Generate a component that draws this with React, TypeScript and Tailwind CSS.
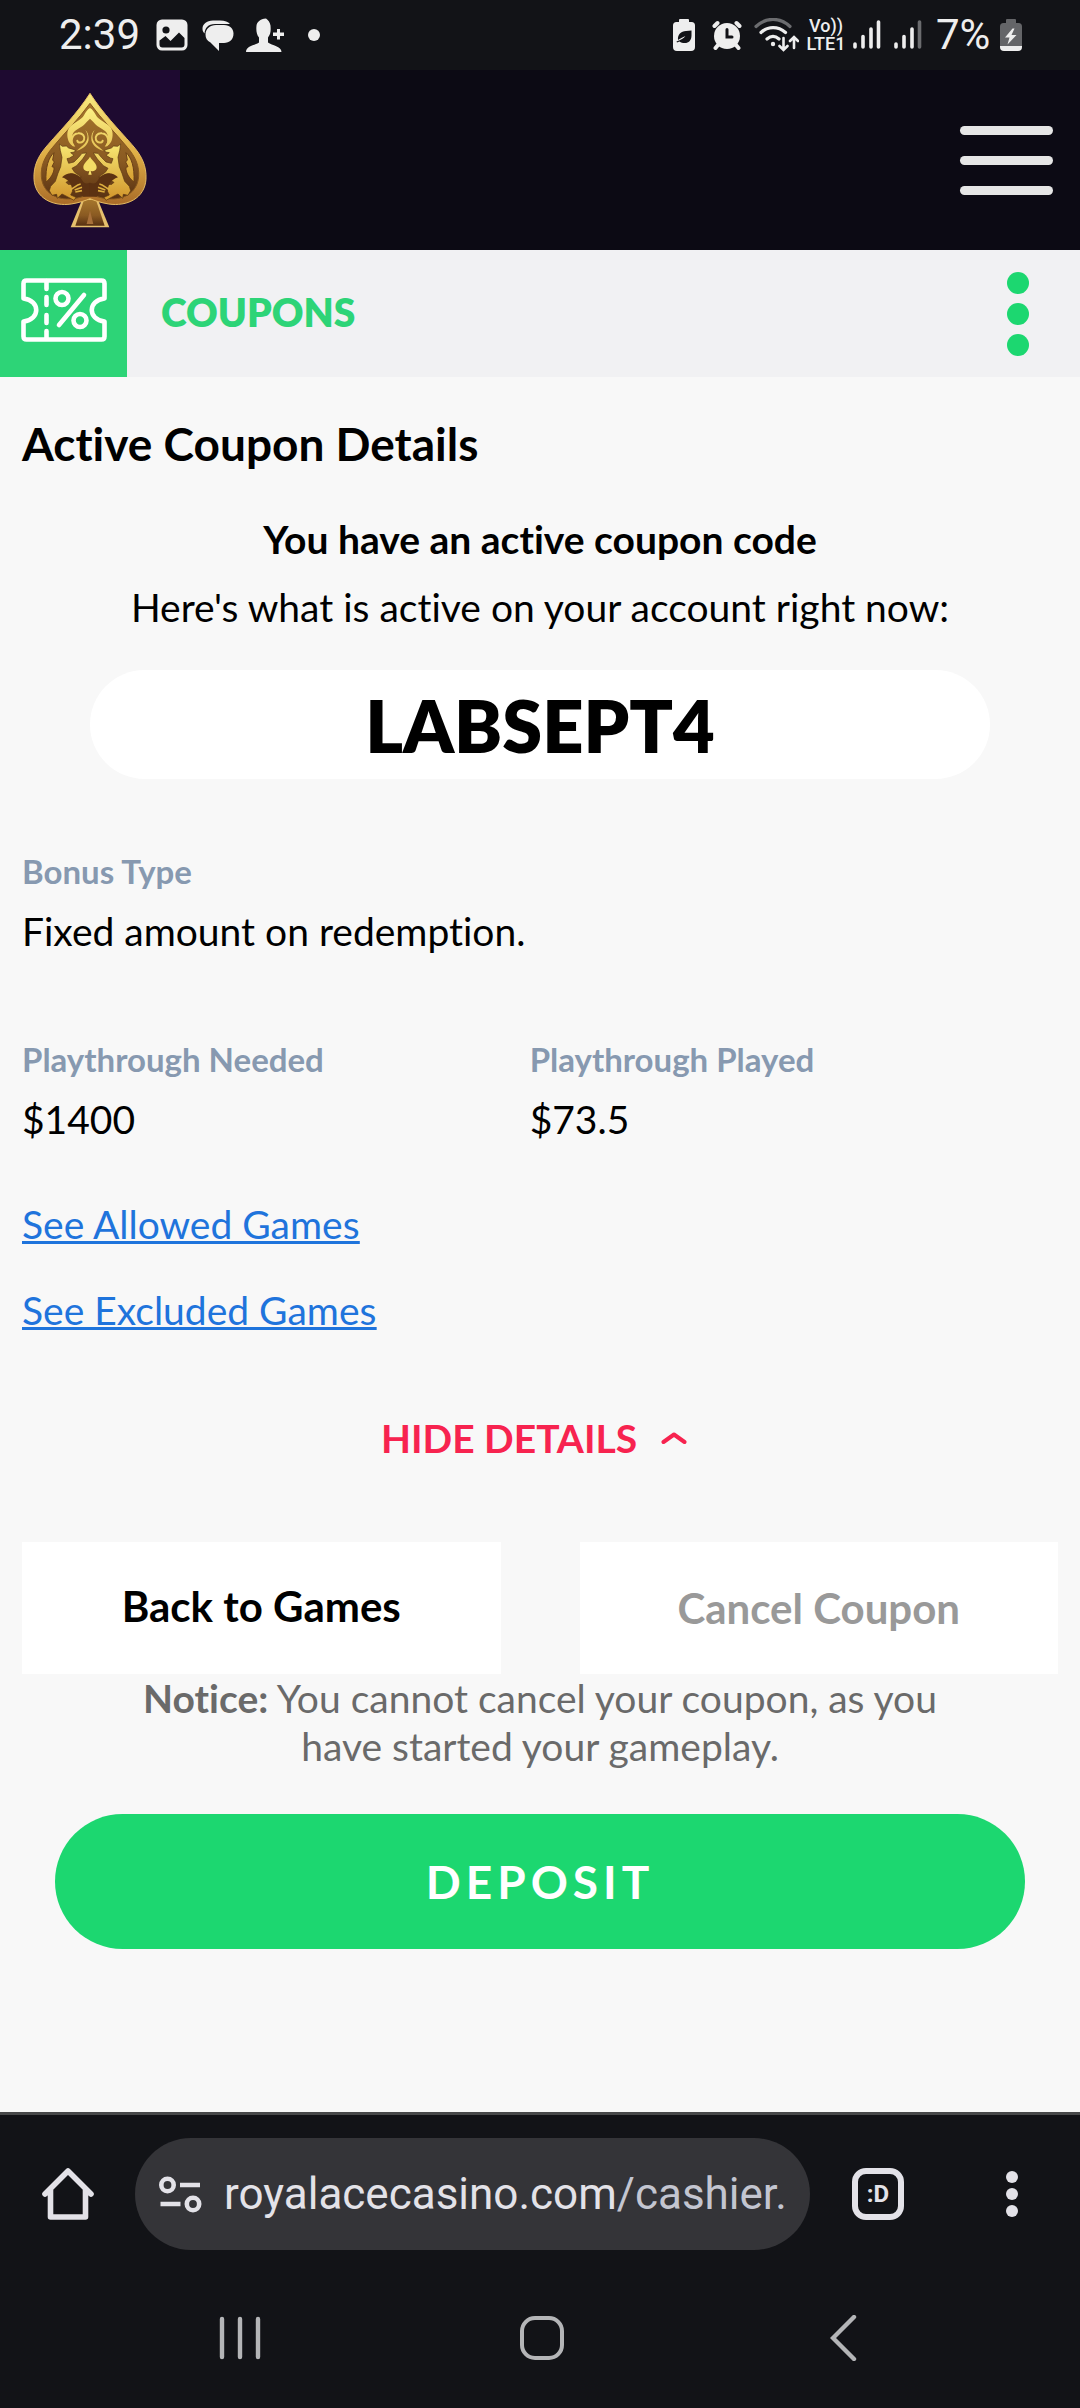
import type {ReactNode} from "react";

function SignalBars({weak = false}: { weak?: boolean }) {
    return (
        <svg viewBox="0 0 28 30" className="h-[30px] w-7" fill="none" stroke="#eee" strokeWidth="3.6" strokeLinecap="round">
            <path d="M2 24v3M10 16.500v10.500M18 9v18"/>
            <path d="M25.500 2v25" stroke={weak ? "#6b6c6f" : "#eee"}/>
        </svg>
    );
}

function StatusBar() {
    return (
        <div className="flex h-[70px] items-center justify-between bg-[#121317] pl-[59px] pr-[58px] font-['Roboto',sans-serif] text-[#eee]">
            <div className="flex items-center gap-4">
                <span className="w-[81px] text-[42px] leading-[48px]">2:39</span>
                <svg viewBox="0 0 32 32" className="size-8">
                    <rect width="31" height="31" x=".5" y=".5" rx="5.500" fill="#eee"/>
                    <circle cx="10" cy="11" r="3.600" fill="#121317"/>
                    <path d="M3.500 21.500L9.500 17l5 5 8.500-8.500 5.500 5.500v6.500q0 3-3 3h-19q-3 0-3-3z" fill="#121317"/>
                </svg>
                <svg viewBox="0 0 32 32" className="-ml-0.5 size-8" fill="#eee">
                    <path d="M11 1.500h7c5 0 8 1.500 10 3.500H13C6 5 3 9 2.500 14.500.500 12.500.500 10.500.500 9.500c0-4 4-8 10.500-8z"/>
                    <path d="M14 6h8c6 0 9.500 4 9.500 8.500 0 6-4 9.500-9.500 9.500h-5v8l-8.500-8.500C5 22 3.500 19 3.500 15.500 3.500 10 8 6 14 6z"/>
                </svg>
                <svg viewBox="0 0 38 34" className="-ml-1 h-[34px] w-[38px]" fill="#eee">
                    <path d="M20 .500c2 1.500 4 3.500 4.500 7 .500 6 0 9-2.500 12v5c4 3 13.500 3.500 13.500 9.500H0c0-6 9-6.500 13-9.500v-5c-2.500-3-3-7-2.500-12C11 4 14 1 20 .500z"/>
                    <path d="M31 11h3v3.500h4v3.500h-4v3.500h-3v-3.500h-4v-3.500h4z"/>
                </svg>
                <span className="ml-2 size-3 rounded-full bg-[#eee]"/>
            </div>
            <div className="flex items-center">
                <svg viewBox="0 0 22 32" className="h-8 w-[22px]">
                    <path d="M7 0h8q1 0 1 1v2h2.500Q22 3 22 6.500V28q0 4-4 4H4q-4 0-4-4V6.500Q0 3 3.500 3H6V1q0-1 1-1z" fill="#eee"/>
                    <path d="M18.500 11.500v5c0 5-3 7.500-6.500 7.500-2.500 0-4-.500-5.500-1.500L4 23.500l-.5-1c5-2 7-3 9-5.500-3 1.500-5.500 2.500-7.500 4-.5-5.500 3-9 8-9z" fill="#121317"/>
                </svg>
                <svg viewBox="0 0 30 30" className="ml-[17px] size-[30px]" fill="none" stroke="#eee" strokeWidth="4" strokeLinecap="round">
                    <circle cx="15" cy="16" r="13" fill="#eee" stroke="none"/>
                    <path d="M2.500 6l3-3M27.500 6l-3-3M6 25l-2.500 3M24 25l2.500 3"/>
                    <path d="M15 9.500V17h5" stroke="#121317" strokeWidth="3"/>
                </svg>
                <svg viewBox="0 0 45 34" className="ml-3 h-[34px] w-[45px]" fill="none" stroke="#eee" strokeWidth="3.200" strokeLinecap="round">
                    <path d="M2 8.500C12-1 26-1 36 8.500" stroke="#6b6c6f"/>
                    <path d="M7 14.500c7-6.500 17-6.500 24.500 0M13 21c4-3.500 8-3.500 12 0"/>
                    <circle cx="19" cy="26" r="2.200" fill="#eee" stroke="none"/>
                    <path d="M29.500 20v11M25.500 28l4 4 4-4M40 30V20M36 23l4-4 4 4" strokeWidth="2.600"/>
                </svg>
                <div className="ml-1.5 flex w-[42px] flex-col items-center text-[18px] leading-[18px] font-medium">
                    <span>Vo))</span>
                    <span>LTE1</span>
                </div>
                <div className="ml-1.5"><SignalBars/></div>
                <div className="ml-[13px]"><SignalBars weak/></div>
                <span className="ml-[14px] w-[60px] text-[42px] leading-[48px]">7%</span>
                <svg viewBox="0 0 22 32" className="ml-1 h-8 w-[22px]">
                    <path d="M7 0h8q1 0 1 1v3h2.500Q22 4 22 7.500V27H0V7.500Q0 4 3.500 4H6V1q0-1 1-1z" fill="#646568"/>
                    <path d="M0 27h22v1q0 4-4 4H4q-4 0-4-4z" fill="#eee"/>
                    <path d="M12.500 9.500L5 18.500h4.500L7.500 25.500l9-9.500h-5l3-6.500z" fill="#eee"/>
                </svg>
            </div>
        </div>
    );
}

// Left half of the ornament; mirrored for the right half
function LogoOrnament() {
    return (
        <g>
            <path d="M210 84c-8 4-14 14-18 22-8 14-26 20-40 32-10 9-12 26-8 40 3 14 14 22 22 22-12-14-14-34-2-46 10-10 26-14 36-28l10-10z" fill="url(#gold)"/>
            <path d="M160 196c-10-12-4-34 14-36 14-2 22 10 18 20s-18 10-20 2" fill="none" stroke="url(#gold)" strokeWidth="6" strokeLinecap="round"/>
            <path d="M196 150c12 18 8 36-14 52l-12 10c22-6 36-20 36-36 0-14-4-20-10-26z" fill="url(#gold)"/>
            <path d="M102 218c-16 14-26 42-24 88 14-10 26-30 24-44l-6-2 7-14-5-6z" fill="url(#gold)" stroke="#6b4016" strokeWidth="3"/>
            <path d="M118 192l9 7 12-1 7 6 20 6-2 6-12 2 10 8-13 8-8 2 5 14 16-4 14-14 10-12 14-1-12 18-18 20-14 8 8 12 20 14-16-1-16-9-4 10 10 6-20 10 6 6 26 2-10 14-8 16 16 7-6 9-20-11-16-8-14 13-2-12-14 3-8-14 4-13 14-15 8-24 8-20 4-28-5-20z" fill="url(#goldDeep)" stroke="#593511" strokeWidth="2"/>
            <path d="M126 292c18-18 46-16 60 8 6 12 14 12 24 8v42h-20c-6-8-12-14-12-28-10-2-16 6-22 12 2-18-8-34-30-42z" fill="#5c3212"/>
            <path d="M164 330l22-8M166 336l20-4M150 330c10-4 20-16 32-18" stroke="#dcae3f" strokeWidth="5" fill="none"/>
        </g>
    );
}

function Logo() {
    return (
        <svg viewBox="0 0 180 180" className="size-full" role="img" aria-label="Royal Ace">
            <defs>
                <linearGradient id="rim" x1="0" y1="0" x2="0" y2="1">
                    <stop offset="0" stopColor="#f9ec80"/>
                    <stop offset=".55" stopColor="#dfae45"/>
                    <stop offset="1" stopColor="#a96b28"/>
                </linearGradient>
                <linearGradient id="inner" x1="0" y1="0" x2="0" y2="1">
                    <stop offset="0" stopColor="#a5762c"/>
                    <stop offset=".6" stopColor="#8a5a22"/>
                    <stop offset="1" stopColor="#583112"/>
                </linearGradient>
                <linearGradient id="gold" gradientUnits="userSpaceOnUse" x1="0" y1="80" x2="0" y2="290">
                    <stop offset="0" stopColor="#fdf286"/>
                    <stop offset="1" stopColor="#d9a536"/>
                </linearGradient>
                <linearGradient id="goldDeep" gradientUnits="userSpaceOnUse" x1="0" y1="190" x2="0" y2="345">
                    <stop offset="0" stopColor="#f8e873"/>
                    <stop offset="1" stopColor="#d49c31"/>
                </linearGradient>
            </defs>
            <g transform="translate(20 10) scale(.3333)">
                <path d="M190 350l-38 92h116l-38-92z" fill="#e6c06d"/>
                <path d="M192 360l-26 77h88l-26-77z" fill="url(#inner)"/>
                <path d="M210 392l-10 40h20z" fill="#a8703a"/>
                <path d="M210 40c40 62 84 106 126 154 30 34 44 64 42 104-4 58-58 82-112 74-24-4-42-10-56-16-14 6-32 12-56 16-54 8-108-16-112-74-2-40 12-70 42-104C126 146 170 102 210 40z" fill="url(#rim)" stroke="#e7bd62" strokeWidth="3"/>
                <path d="M210 70c36 50 76 88 112 132 26 30 36 58 34 88-4 48-46 72-94 66-22-2-38-8-52-14-14 6-30 12-52 14-48 6-90-18-94-66-2-30 8-58 34-88C134 158 174 120 210 70z" fill="url(#inner)" stroke="#86571e" strokeWidth="3"/>
                <LogoOrnament/>
                <g transform="translate(420 0) scale(-1 1)"><LogoOrnament/></g>
                <path d="M210 230c8 14 20 20 20 32 0 10-10 14-18 10l3 12h-10l3-12c-8 4-18 0-18-10 0-12 12-18 20-32z" fill="#f3dc66"/>
            </g>
        </svg>
    );
}

function SiteHeader() {
    return (
        <header className="flex h-[180px] items-center justify-between bg-[#0c0a14]">
            <a href="#home" className="block size-[180px] bg-[#1e0a30]"><Logo/></a>
            <button type="button" aria-label="Open menu" className="mr-[27px] flex w-[93px] flex-col gap-[21px]">
                <span className="h-[9px] rounded-full bg-[#e6e6e6]"/>
                <span className="h-[9px] rounded-full bg-[#e6e6e6]"/>
                <span className="h-[9px] rounded-full bg-[#e6e6e6]"/>
            </button>
        </header>
    );
}

function SectionBar() {
    return (
        <div className="flex h-[127px] items-center bg-[#f1f1f3]">
            <div className="flex size-[127px] justify-center bg-[#2dd477] pt-7">
                <svg viewBox="0 0 86 64" className="h-16 w-[86px]" fill="none" stroke="#fff" strokeWidth="4.600" strokeLinecap="round" strokeLinejoin="round">
                    <path d="M5.500 2.500h75q3 0 3 3v15c-17 2-17 21 0 23v15q0 3-3 3h-75q-3 0-3-3v-15c17-2 17-21 0-23v-15q0-3 3-3z"/>
                    <path d="M25.500 3v8M25.500 19v8M25.500 37v8M25.500 53v7M63 17L38 47"/>
                    <circle cx="41" cy="20.500" r="6.500"/>
                    <circle cx="59" cy="42.500" r="6.500"/>
                </svg>
            </div>
            <h1 className="ml-[34px] flex-1 pb-1 text-[39px] leading-[48px] font-extrabold text-[#2dd477]">COUPONS</h1>
            <button type="button" aria-label="More options" className="mr-[51px] flex flex-col gap-[9px]">
                <span className="size-[22px] rounded-full bg-[#1cd770]"/>
                <span className="size-[22px] rounded-full bg-[#1cd770]"/>
                <span className="size-[22px] rounded-full bg-[#1cd770]"/>
            </button>
        </div>
    );
}

function Field({label, children}: { label: string; children: ReactNode }) {
    return (
        <div>
            <dt className="text-[33px] leading-[40px] font-bold text-[#8799b0]">{label}</dt>
            <dd className="mt-4 text-[39px] leading-[48px]">{children}</dd>
        </div>
    );
}

function CouponDetails() {
    return (
        <main className="flex-1 px-[22px] pt-10 pb-10">
            <h2 className="text-[46px] leading-[54px] font-bold">Active Coupon Details</h2>
            <h3 className="mt-11 text-center text-[39px] leading-[48px] font-bold">You have an active coupon code</h3>
            <p className="mt-5 text-center text-[39px] leading-[48px]">Here's what is active on your account right now:</p>
            <div className="mx-[68px] mt-[39px] flex h-[109px] items-center justify-center rounded-full bg-white text-[72px] leading-[88px] font-extrabold">
                LABSEPT4
            </div>

            <dl className="mt-[72px] grid grid-cols-[49%_1fr] gap-y-[84px]">
                <div className="col-span-2">
                    <Field label="Bonus Type">Fixed amount on redemption.</Field>
                </div>
                <Field label="Playthrough Needed">$1400</Field>
                <Field label="Playthrough Played">$73.5</Field>
            </dl>

            <div className="mt-[57px] flex flex-col items-start gap-[38px] text-[39px] leading-[48px] text-[#1f74dc] underline decoration-[3px]">
                <a href="#allowed">See Allowed Games</a>
                <a href="#excluded">See Excluded Games</a>
            </div>

            <button type="button" className="mx-auto mt-20 flex items-center gap-6 pr-3 text-[39px] leading-[48px] font-bold text-[#f7234f]">
                HIDE DETAILS
                <svg viewBox="0 0 26 14" className="h-[14px] w-[26px]" fill="none" stroke="currentColor" strokeWidth="4" strokeLinecap="round" strokeLinejoin="round">
                    <path d="M2.500 11L13 3.500 23.500 11"/>
                </svg>
            </button>

            <div className="mt-20 flex gap-[79px] text-[42px] leading-[50px] font-bold">
                <button type="button" className="h-[132px] flex-1 bg-white pb-1">Back to Games</button>
                <button type="button" disabled className="h-[132px] flex-1 bg-white text-[#999]">Cancel Coupon</button>
            </div>
            <p className="mx-auto max-w-[830px] text-center text-[39px] leading-[48px] text-[#6a6a6a]">
                <strong className="font-bold">Notice:</strong> You cannot cancel your coupon, as you have started your gameplay.
            </p>
            <div className="mt-11 px-[33px]">
                <button type="button" className="h-[135px] w-full rounded-full bg-[#1cd770] text-[46px] leading-[54px] font-bold tracking-[5px] text-white">
                    DEPOSIT
                </button>
            </div>
        </main>
    );
}

function BrowserBar() {
    return (
        <div className="flex h-[161px] items-start border-t-[3px] border-[#474849] bg-[#121317] pt-[23px] font-['Roboto',sans-serif] text-[#e3e2e8]">
            <div className="flex h-28 w-full items-center">
                <button type="button" aria-label="Home" className="ml-[42px]">
                    <svg viewBox="0 0 52 52" className="size-[52px]" fill="none" stroke="currentColor" strokeWidth="5.600" strokeLinecap="round" strokeLinejoin="round">
                        <path d="M3 26L26 3l23 23M8.500 22v27h35V22"/>
                    </svg>
                </button>
                <div className="ml-[41px] flex h-28 min-w-0 flex-1 items-center rounded-full bg-[#343438] pr-5 pl-6">
                    <svg viewBox="0 0 43 37" className="h-[37px] w-[43px] shrink-0" fill="none" stroke="currentColor" strokeWidth="4.600">
                        <circle cx="8.500" cy="9" r="6.200"/>
                        <circle cx="34" cy="28" r="6.200"/>
                        <path d="M21 9h20M1.500 28h20"/>
                    </svg>
                    <div className="ml-[22px] flex-1 overflow-hidden text-[44px] leading-[56px] whitespace-nowrap">
                        royalacecasino.com<span className="text-[#c3c5d0]">/cashier.</span>
                    </div>
                </div>
                <button type="button" aria-label="Switch tabs" className="ml-[42px] flex size-[52px] items-center justify-center rounded-[14px] border-[6px] border-current text-[24px] leading-6 font-bold">
                    :D
                </button>
                <button type="button" aria-label="Browser menu" className="mr-[62px] ml-[102px] flex flex-col gap-[5px]">
                    <span className="size-3 rounded-full bg-current"/>
                    <span className="size-3 rounded-full bg-current"/>
                    <span className="size-3 rounded-full bg-current"/>
                </button>
            </div>
        </div>
    );
}

function SystemNav() {
    return (
        <nav className="flex h-[135px] items-center justify-between bg-[#121317] pr-[222px] pb-1.5 pl-[219px]">
            <button type="button" aria-label="Recent apps">
                <svg viewBox="0 0 42 46" className="h-[46px] w-[42px]" fill="none" stroke="#b4b5b7" strokeWidth="4.400" strokeLinecap="round">
                    <path d="M3 4v38M21 4v38M39 4v38"/>
                </svg>
            </button>
            <button type="button" aria-label="Home screen" className="size-11 rounded-[15px] border-4 border-[#b4b5b7]"/>
            <button type="button" aria-label="Back" className="pl-2">
                <svg viewBox="0 0 28 46" className="h-[46px] w-7" fill="none" stroke="#b4b5b7" strokeWidth="4.400" strokeLinecap="round">
                    <path d="M24 2L3 23l21 21"/>
                </svg>
            </button>
        </nav>
    );
}

export default function App() {
    return (
        <div className="flex min-h-screen flex-col bg-[#f8f8f8] font-['Lato',sans-serif] text-black [font-variant-ligatures:none]">
            <StatusBar/>
            <SiteHeader/>
            <SectionBar/>
            <CouponDetails/>
            <BrowserBar/>
            <SystemNav/>
        </div>
    );
}
